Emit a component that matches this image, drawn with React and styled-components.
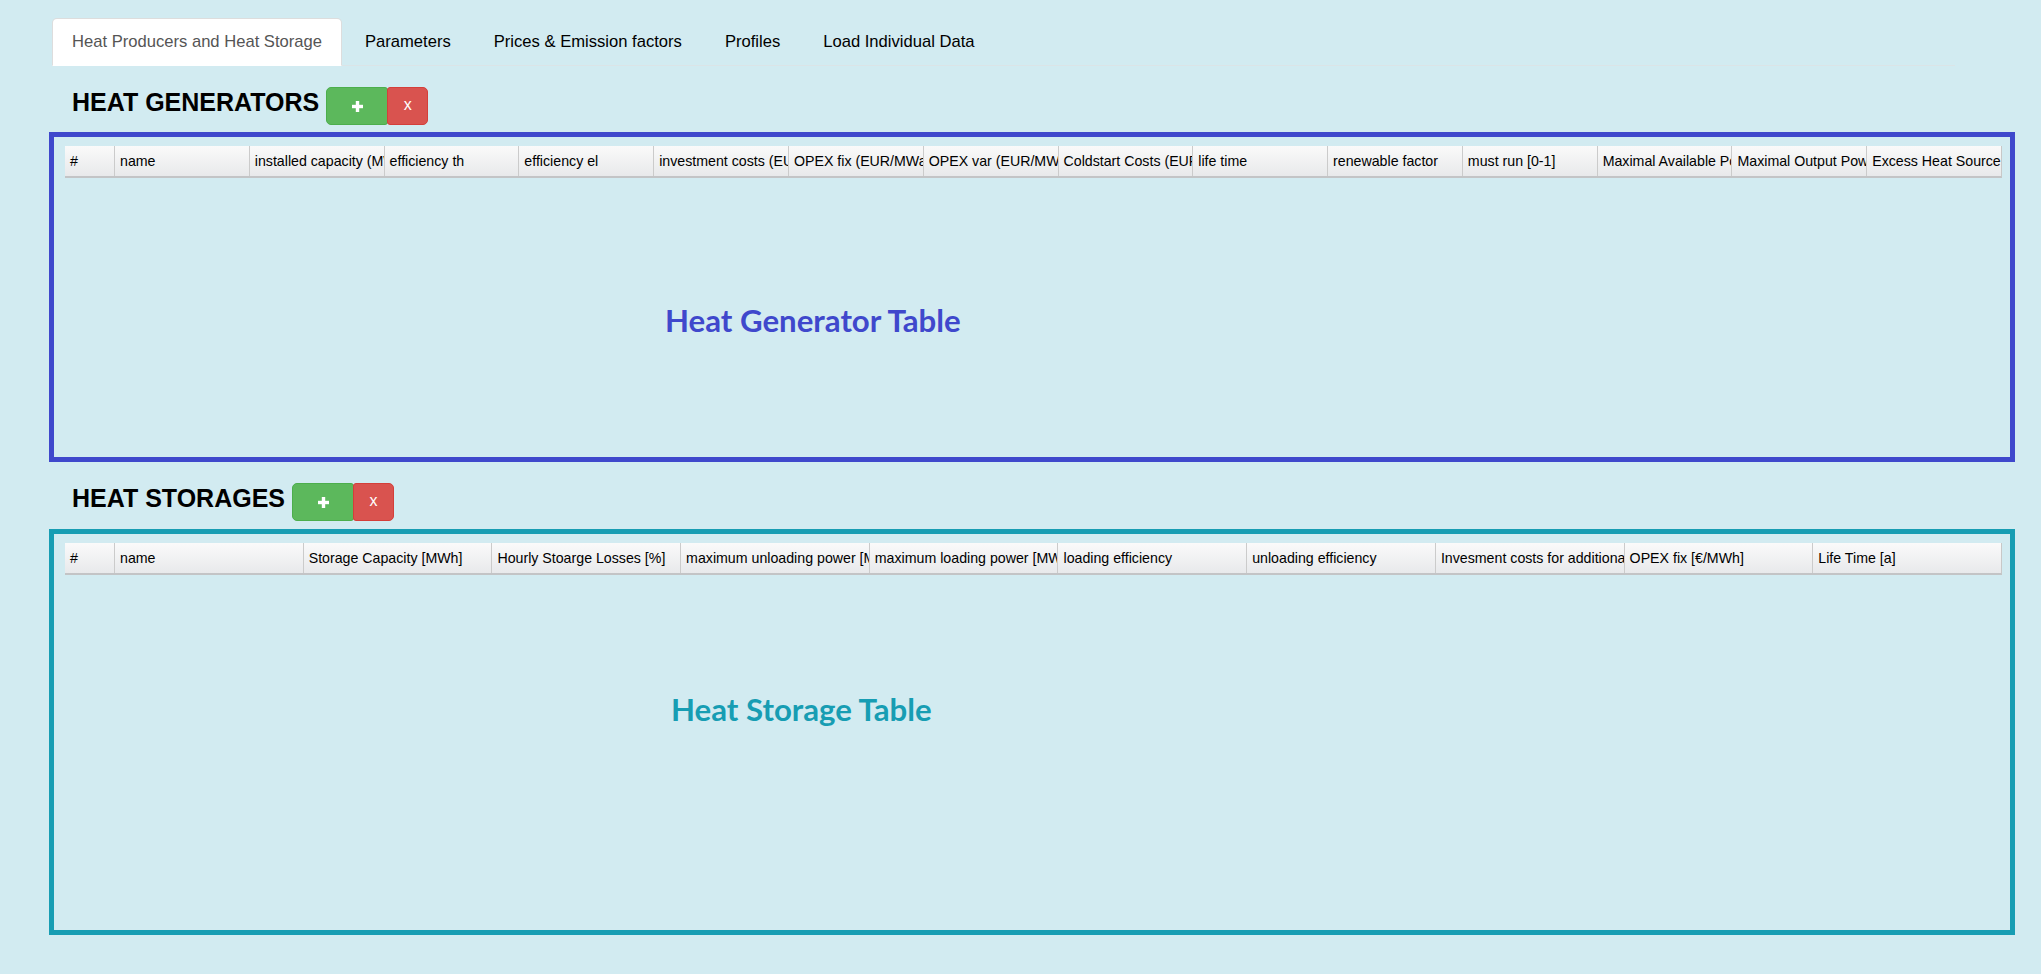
import React from 'react';
import styled, { createGlobalStyle } from 'styled-components';

const GlobalStyle = createGlobalStyle`
  html, body {
    margin: 0;
    padding: 0;
    background: #d2ebf1;
  }
  body {
    font-family: 'Liberation Sans', Arial, sans-serif;
    color: #000;
  }
`;

const Page = styled.div`
  min-height: 974px;
  box-sizing: border-box;
  padding: 18px 26px 0 49px;
`;

const TabBar = styled.ul`
  display: flex;
  list-style: none;
  margin: 0 60px 0 3px;
  padding: 0;
  border-bottom: 1px solid #dbe4e7;
`;

const Tab = styled.li`
  margin: 0 3px -1px 0;
  padding: 11px 19px;
  line-height: 24px;
  font-size: 16.6px;
  border: 1px solid ${p => (p.$active ? '#dddddd' : 'transparent')};
  border-bottom-color: transparent;
  border-radius: 5px 5px 0 0;
  background: ${p => (p.$active ? '#ffffff' : 'transparent')};
  color: ${p => (p.$active ? '#555555' : '#000000')};
  white-space: nowrap;
  cursor: pointer;
`;

const HeadingRow = styled.div`
  display: flex;
  align-items: center;
  height: 38px;
  margin-top: ${p => p.$top}px;
  padding-left: 23px;
`;

const Heading = styled.h3`
  margin: 0 7px 8px 0;
  font-size: 25px;
  line-height: 1;
  font-weight: 700;
  color: #000;
`;

const BtnGroup = styled.div`
  display: flex;
  height: 38px;
`;

const AddBtn = styled.button`
  width: 62px;
  height: 38px;
  display: flex;
  align-items: center;
  justify-content: center;
  background: #5cb85c;
  border: 1px solid #4cae4c;
  border-radius: 5px 3px 3px 5px;
  padding: 0;
  cursor: pointer;
`;

const RemoveBtn = styled.button`
  width: 41px;
  height: 38px;
  margin-left: -1px;
  background: #d9534f;
  border: 1px solid #d43f3a;
  border-radius: 3px 5px 5px 3px;
  color: #fff;
  font-family: 'Liberation Sans', Arial, sans-serif;
  font-size: 16px;
  line-height: 1;
  padding: 0 0 2px;
  cursor: pointer;
`;

const Box = styled.div`
  box-sizing: border-box;
  height: ${p => p.$height}px;
  margin-top: ${p => p.$top}px;
  border: 5px solid ${p => p.$color};
  padding: 9px 8px 0 11px;
`;

const HeaderRow = styled.div`
  display: grid;
  grid-template-columns: 49px repeat(${p => p.$cols}, 1fr);
  height: 30px;
  border-bottom: 2px solid #c3c4c6;
  border-right: 1px solid #c8c8c8;
  background: linear-gradient(#fafafa, #e8e9eb);
`;

const HeaderCell = styled.div`
  display: flex;
  align-items: center;
  padding-left: 5px;
  font-size: 14.2px;
  color: #000;
  white-space: nowrap;
  overflow: hidden;
  border-left: ${p => (p.$first ? 'none' : '1px solid #cbcbcb')};
  min-width: 0;
`;

const Annotation = styled.div`
  margin: ${p => p.$top}px 0 0 ${p => p.$left}px;
  font-family: Lato, 'Open Sans', sans-serif;
  font-weight: 700;
  font-size: 31.2px;
  line-height: 30px;
  color: ${p => p.$color};
  white-space: nowrap;
`;

const PlusIcon = () => (
  <svg width="11" height="11" viewBox="0 0 11 11">
    <rect x="3.8" y="0" width="3.4" height="11" fill="#fff" />
    <rect x="0" y="3.8" width="11" height="3.4" fill="#fff" />
  </svg>
);

const tabs = [
  'Heat Producers and Heat Storage',
  'Parameters',
  'Prices & Emission factors',
  'Profiles',
  'Load Individual Data',
];

const generatorCols = [
  'name',
  'installed capacity (MW)',
  'efficiency th',
  'efficiency el',
  'investment costs (EUR/MW)',
  'OPEX fix (EUR/MWa)',
  'OPEX var (EUR/MWh)',
  'Coldstart Costs (EUR/MW)',
  'life time',
  'renewable factor',
  'must run [0-1]',
  'Maximal Available Power',
  'Maximal Output Power',
  'Excess Heat Source',
];

const storageCols = [
  'name',
  'Storage Capacity [MWh]',
  'Hourly Stoarge Losses [%]',
  'maximum unloading power [MW]',
  'maximum loading power [MW]',
  'loading efficiency',
  'unloading efficiency',
  'Invesment costs for additional capacity',
  'OPEX fix [€/MWh]',
  'Life Time [a]',
];

const Section = ({ title, top, boxTop, height, color, cols, label, labelTop, labelLeft }) => (
  <>
    <HeadingRow $top={top}>
      <Heading>{title}</Heading>
      <BtnGroup>
        <AddBtn>
          <PlusIcon />
        </AddBtn>
        <RemoveBtn>x</RemoveBtn>
      </BtnGroup>
    </HeadingRow>
    <Box $color={color} $height={height} $top={boxTop}>
      <HeaderRow $cols={cols.length}>
        <HeaderCell $first>#</HeaderCell>
        {cols.map(c => (
          <HeaderCell key={c}>{c}</HeaderCell>
        ))}
      </HeaderRow>
      <Annotation $color={color} $top={labelTop} $left={labelLeft}>
        {label}
      </Annotation>
    </Box>
  </>
);

const App = () => (
  <Page>
    <GlobalStyle />
    <TabBar>
      {tabs.map((t, i) => (
        <Tab key={t} $active={i === 0}>
          {t}
        </Tab>
      ))}
    </TabBar>
    <Section
      title="HEAT GENERATORS"
      top={21}
      boxTop={6.5}
      height={330}
      color="#3f48cc"
      cols={generatorCols}
      label="Heat Generator Table"
      labelTop={127.5}
      labelLeft={600}
    />
    <Section
      title="HEAT STORAGES"
      top={21.5}
      boxTop={7.5}
      height={406}
      color="#179db3"
      cols={storageCols}
      label="Heat Storage Table"
      labelTop={119}
      labelLeft={606}
    />
  </Page>
);

export default App;
